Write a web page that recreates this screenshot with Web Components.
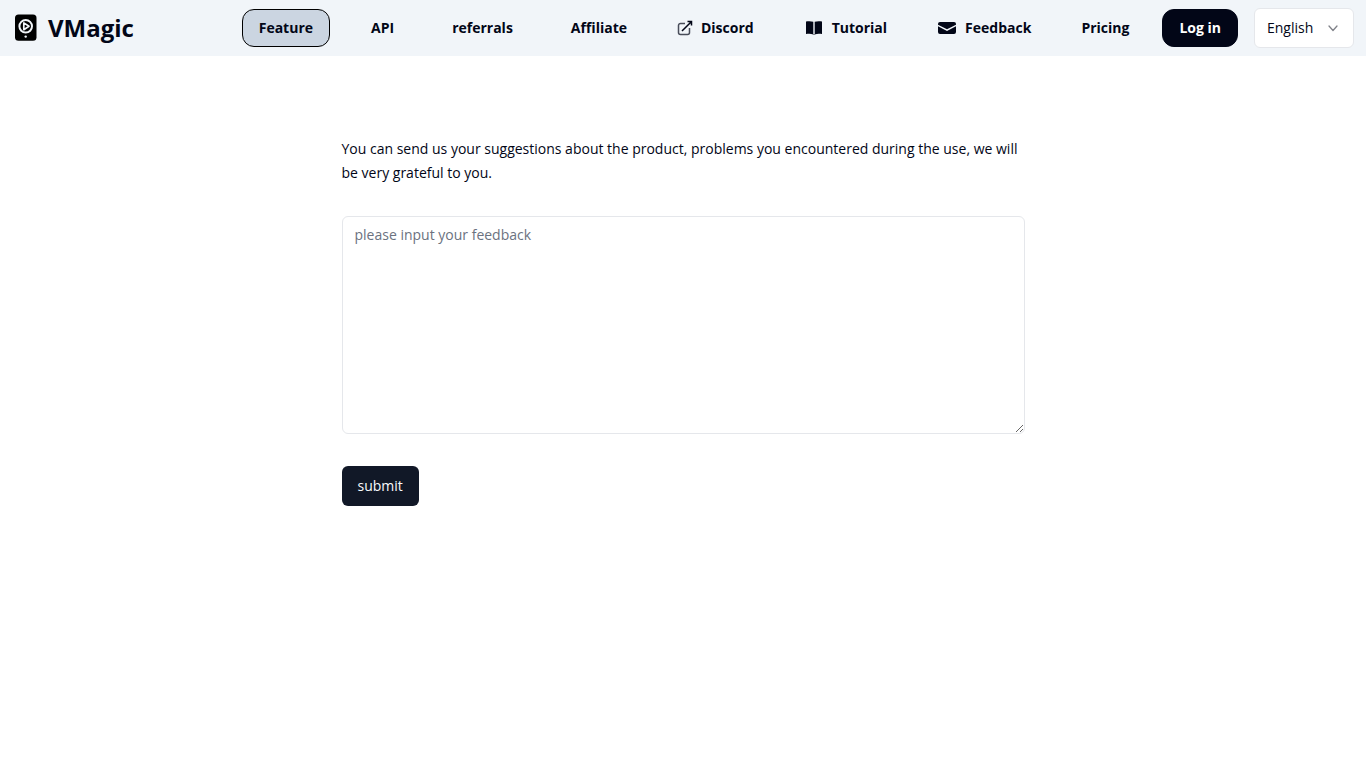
<!DOCTYPE html>
<html lang="en">
<head>
<meta charset="UTF-8">
<meta name="viewport" content="width=device-width, initial-scale=1.0">
<title>VMagic</title>
<style>
    body {
        margin: 0;
        background: #fff;
        color: #020617;
        font-family: 'Open Sans', 'Noto Sans', sans-serif;
        font-size: 14px;
        line-height: 20px;
    }
</style>
</head>
<body>
<site-header>
    <site-logo slot="logo">VMagic</site-logo>
    <nav-link href="#feature" active spaced>Feature</nav-link>
    <nav-link href="#api" spaced>API</nav-link>
    <nav-link href="#referrals" spaced>referrals</nav-link>
    <nav-link href="#affiliate">Affiliate</nav-link>
    <nav-link href="#discord" icon="external">Discord</nav-link>
    <nav-link href="#tutorial" icon="book">Tutorial</nav-link>
    <nav-link href="#feedback" icon="mail">Feedback</nav-link>
    <nav-link href="#pricing">Pricing</nav-link>
    <login-button>Log in</login-button>
    <language-select></language-select>
</site-header>
<feedback-form placeholder="please input your feedback" action-label="submit">
    You can send us your suggestions about the product, problems you encountered during the use, we will be very grateful to you.
</feedback-form>

<script>
const ICONS = {
    external: `
        <svg width="16" height="16" viewBox="0 0 16 16" fill="none" stroke="currentColor" aria-hidden="true">
            <path d="M8 3.5H3.500a2 2 0 0 0-2 2V12.500a2 2 0 0 0 2 2h7a2 2 0 0 0 2-2V8" stroke-opacity=".7" stroke-width="1.500"/>
            <path d="M5 11L14.300 1.700M10.500 1.600h4v4" stroke-width="1.500"/>
        </svg>`,
    book: `
        <svg width="20" height="16" viewBox="0 0 20 16" fill="currentColor" aria-hidden="true">
            <path d="M2 1.500C4.500 1 7 1 9.300 1.800v12.600C7 13.700 4.500 13.700 2 14.100zM10.700 1.800C13 1 15.500 1 18 1.500v12.600c-2.500-.4-5-.4-7.300.3z"/>
            <path d="M9 14h2v1H9z" fill-opacity=".4"/>
        </svg>`,
    mail: `
        <svg width="20" height="16" viewBox="0 0 20 16" fill="currentColor" aria-hidden="true">
            <path d="M3 2h14a2 2 0 0 1 2 2v.7L10 9.300 1 4.700V4a2 2 0 0 1 2-2z"/>
            <path d="M1 6.300l9 4.600 9-4.600V12a2 2 0 0 1-2 2H3a2 2 0 0 1-2-2z"/>
        </svg>`
};

class SiteHeader extends HTMLElement {
    constructor() {
        super();
        this.attachShadow({ mode: 'open' });
        this.shadowRoot.innerHTML = `
            <style>
                :host { display: block; background: #f1f5f9; }
                header { display: flex; align-items: center; justify-content: space-between; min-height: 56px; padding: 0 12px; box-sizing: border-box; }
                nav { display: flex; align-items: center; gap: 16px; }
            </style>
            <header>
                <slot name="logo"></slot>
                <nav><slot></slot></nav>
            </header>
        `;
    }
}
customElements.define('site-header', SiteHeader);

class SiteLogo extends HTMLElement {
    constructor() {
        super();
        this.attachShadow({ mode: 'open' });
        this.shadowRoot.innerHTML = `
            <style>
                :host { display: block; }
                a { display: flex; align-items: center; gap: 8px; color: inherit; text-decoration: none; font-size: 24px; line-height: 32px; font-weight: 700; }
                svg { display: block; }
            </style>
            <a href="#home">
                <svg width="28" height="28" viewBox="0 0 28 28" aria-hidden="true">
                    <rect x="3" y="0.400" width="21.500" height="26.300" rx="3.500" fill="#000"/>
                    <circle cx="13.700" cy="12.300" r="6.300" fill="none" stroke="#f1f5f9" stroke-width="2"/>
                    <path d="M11.800 8.900v6.800l5.200-3.400z" fill="none" stroke="#f1f5f9" stroke-width="1.700" stroke-linejoin="round"/>
                    <circle cx="13.700" cy="22.600" r="1.200" fill="#f1f5f9"/>
                </svg>
                <slot></slot>
            </a>
        `;
    }
}
customElements.define('site-logo', SiteLogo);

class NavLink extends HTMLElement {
    connectedCallback() {
        if (this.shadowRoot) return;
        this.attachShadow({ mode: 'open' });
        const icon = ICONS[this.getAttribute('icon')] || '';

        this.shadowRoot.innerHTML = `
            <style>
                :host { display: block; }
                :host([spaced]) { margin-right: 8px; }
                a {
                    display: flex; align-items: center; gap: 8px; padding: 8px 16px;
                    border: 1px solid transparent; border-radius: 12px;
                    color: inherit; font-weight: 700; text-decoration: none; white-space: nowrap;
                }
                :host([active]) a { background: #cbd5e1; border-color: #000; }
                svg { display: block; flex: none; }
            </style>
            <a href="${this.getAttribute('href')}">${icon}<slot></slot></a>
        `;
    }
}
customElements.define('nav-link', NavLink);

class LoginButton extends HTMLElement {
    constructor() {
        super();
        this.attachShadow({ mode: 'open' });
        this.shadowRoot.innerHTML = `
            <style>
                :host { display: block; }
                button {
                    display: block; padding: 8px 16px; border: 1px solid #020617; border-radius: 12px;
                    background: #020617; color: #fff; font: inherit; font-weight: 700; white-space: nowrap; cursor: pointer;
                }
            </style>
            <button type="button"><slot></slot></button>
        `;
    }
}
customElements.define('login-button', LoginButton);

class LanguageSelect extends HTMLElement {
    constructor() {
        super();
        this.attachShadow({ mode: 'open' });
        this.shadowRoot.innerHTML = `
            <style>
                :host { display: grid; align-items: center; width: 100px; }
                select {
                    grid-area: 1 / 1; appearance: none; width: 100%; height: 40px; margin: 0; padding: 0 32px 0 12px;
                    border: 1px solid #e5e7eb; border-radius: 6px; background: #fff; color: inherit; font: inherit;
                }
                svg { grid-area: 1 / 1; justify-self: end; margin-right: 13px; pointer-events: none; }
            </style>
            <select aria-label="Language">
                <option>English</option>
            </select>
            <svg width="16" height="16" viewBox="0 0 16 16" fill="none" stroke="#808289" stroke-width="1.300" stroke-linecap="round" stroke-linejoin="round" aria-hidden="true">
                <path d="M4 6l4 4.500L12 6"/>
            </svg>
        `;
    }
}
customElements.define('language-select', LanguageSelect);

class FeedbackForm extends HTMLElement {
    connectedCallback() {
        if (this.shadowRoot) return;
        this.attachShadow({ mode: 'open' });
        this.shadowRoot.innerHTML = `
            <style>
                :host { display: block; padding: 80px 0; }
                form { display: flex; flex-direction: column; align-items: flex-start; gap: 32px; width: 50%; margin: 0 auto; }
                p { margin: 0; font-size: 16px; line-height: 24px; }
                label { font-size: 14px; line-height: 20px; }
                textarea {
                    display: block; width: 100%; box-sizing: border-box; margin: 0; padding: 8px 12px;
                    border: 1px solid #e5e7eb; border-radius: 6px; background: #fff; color: inherit; font: inherit; resize: vertical;
                }
                textarea::placeholder { color: #6b7280; }
                button { height: 40px; padding: 0 16px; border: 0; border-radius: 6px; background: #111827; color: #f8fafc; font: inherit; cursor: pointer; }
            </style>
            <form>
                <p><label for="feedback"><slot></slot></label></p>
                <textarea id="feedback" rows="10" placeholder="${this.getAttribute('placeholder')}"></textarea>
                <button type="button">${this.getAttribute('action-label')}</button>
            </form>
        `;
    }
}
customElements.define('feedback-form', FeedbackForm);
</script>
</body>
</html>
